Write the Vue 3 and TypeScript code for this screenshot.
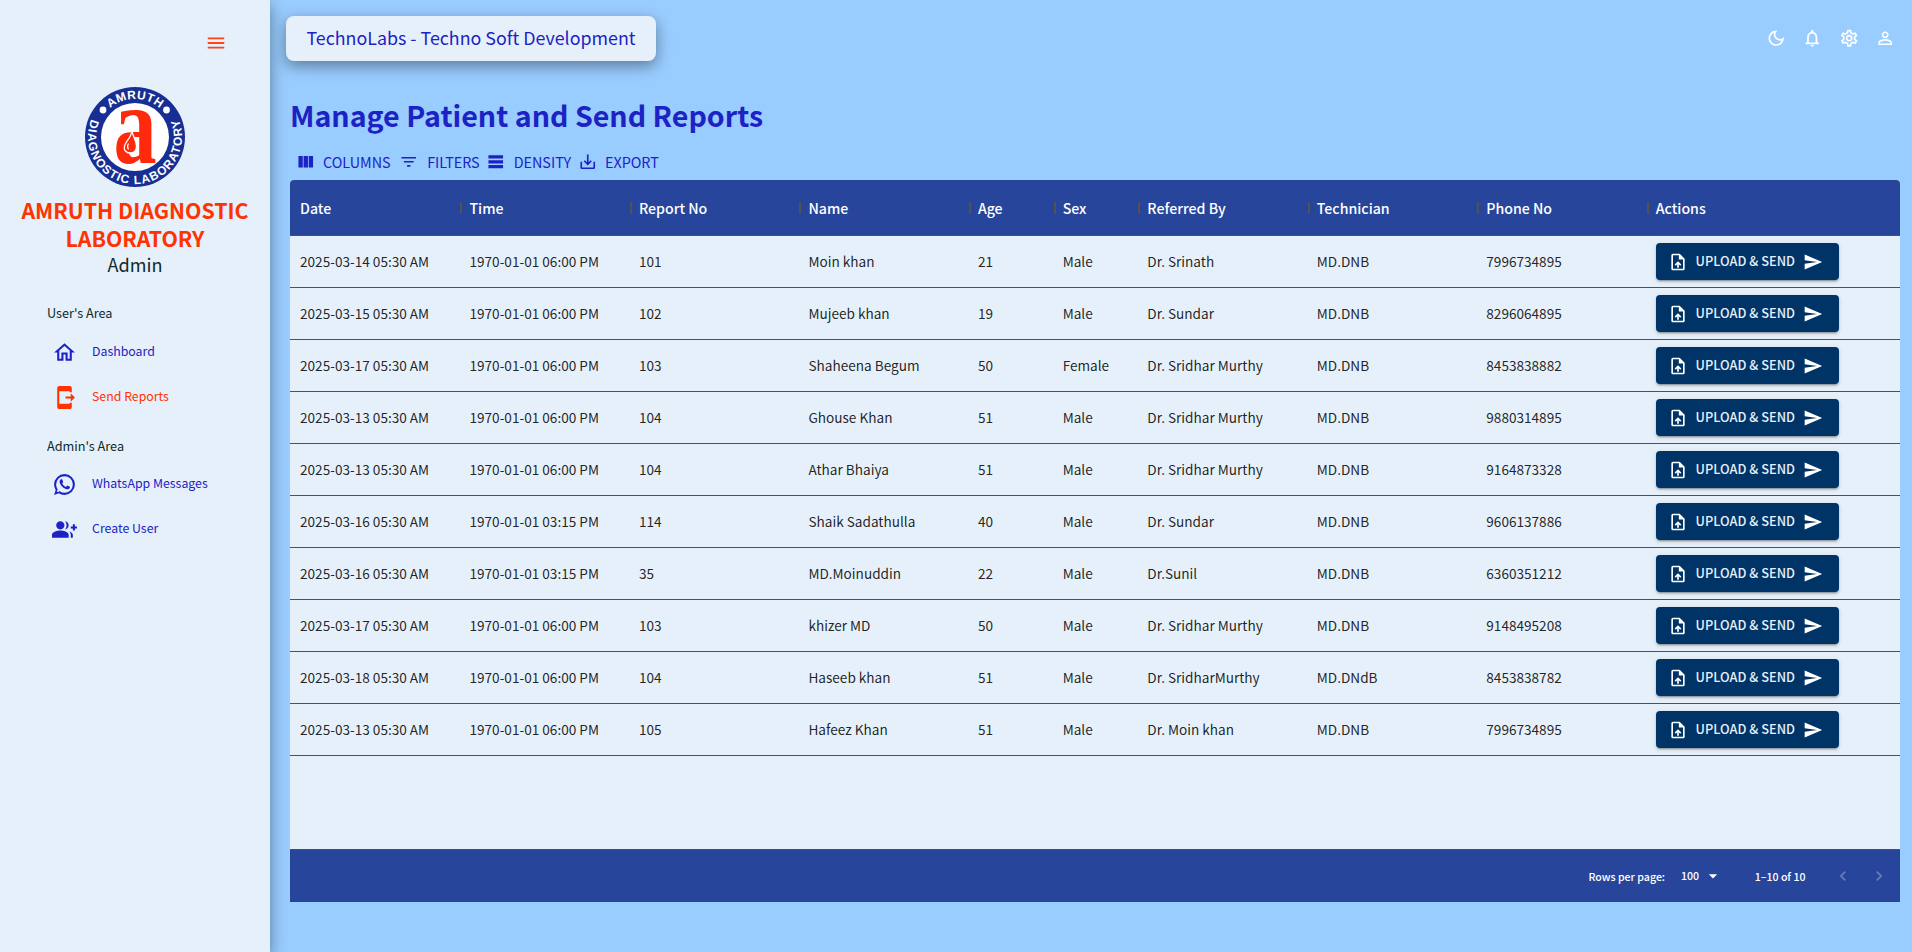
<script setup lang="ts">
interface Column {
  key: string
  label: string
}

interface Patient {
  date: string
  time: string
  report: string
  name: string
  age: string
  sex: string
  referred: string
  technician: string
  phone: string
}

interface NavItem {
  label: string
  icon: string
  active?: boolean
}

const columns: Column[] = [
  { key: 'date', label: 'Date' },
  { key: 'time', label: 'Time' },
  { key: 'report', label: 'Report No' },
  { key: 'name', label: 'Name' },
  { key: 'age', label: 'Age' },
  { key: 'sex', label: 'Sex' },
  { key: 'referred', label: 'Referred By' },
  { key: 'technician', label: 'Technician' },
  { key: 'phone', label: 'Phone No' },
  { key: 'actions', label: 'Actions' },
]

const dataColumns = columns.slice(0, -1)

function patient(
  date: string, time: string, report: string, name: string, age: string,
  sex: string, referred: string, technician: string, phone: string,
): Patient {
  return { date: `${date} 05:30 AM`, time: `1970-01-01 ${time}`, report, name, age, sex, referred, technician, phone }
}

const patients: Patient[] = [
  patient('2025-03-14', '06:00 PM', '101', 'Moin khan', '21', 'Male', 'Dr. Srinath', 'MD.DNB', '7996734895'),
  patient('2025-03-15', '06:00 PM', '102', 'Mujeeb khan', '19', 'Male', 'Dr. Sundar', 'MD.DNB', '8296064895'),
  patient('2025-03-17', '06:00 PM', '103', 'Shaheena Begum', '50', 'Female', 'Dr. Sridhar Murthy', 'MD.DNB', '8453838882'),
  patient('2025-03-13', '06:00 PM', '104', 'Ghouse Khan', '51', 'Male', 'Dr. Sridhar Murthy', 'MD.DNB', '9880314895'),
  patient('2025-03-13', '06:00 PM', '104', 'Athar Bhaiya', '51', 'Male', 'Dr. Sridhar Murthy', 'MD.DNB', '9164873328'),
  patient('2025-03-16', '03:15 PM', '114', 'Shaik Sadathulla', '40', 'Male', 'Dr. Sundar', 'MD.DNB', '9606137886'),
  patient('2025-03-16', '03:15 PM', '35', 'MD.Moinuddin', '22', 'Male', 'Dr.Sunil', 'MD.DNB', '6360351212'),
  patient('2025-03-17', '06:00 PM', '103', 'khizer MD', '50', 'Male', 'Dr. Sridhar Murthy', 'MD.DNB', '9148495208'),
  patient('2025-03-18', '06:00 PM', '104', 'Haseeb khan', '51', 'Male', 'Dr. SridharMurthy', 'MD.DNdB', '8453838782'),
  patient('2025-03-13', '06:00 PM', '105', 'Hafeez Khan', '51', 'Male', 'Dr. Moin khan', 'MD.DNB', '7996734895'),
]

function cell(row: Patient, key: string): string {
  return row[key as keyof Patient]
}

const icons: Record<string, string> = {
  menu: 'M3 18h18v-2H3zm0-5h18v-2H3zm0-7v2h18V6z',
  home: 'm12 5.69 5 4.5V18h-2v-6H9v6H7v-7.81zM12 3 2 12h3v8h6v-6h2v6h6v-8h3z',
  send: 'M17 18H7V6h10v1h2V3c0-1.1-.9-2-2-2H7c-1.1 0-2 .9-2 2v18c0 1.1.9 2 2 2h10c1.1 0 2-.9 2-2v-4h-2zm5-6-4-4v3h-5v2h5v3z',
  whatsapp: 'M16.75 13.96c.25.13.41.2.46.3.06.11.04.61-.21 1.18-.2.56-1.24 1.1-1.7 1.12-.46.02-.47.36-2.96-.73-2.49-1.09-3.99-3.75-4.11-3.92-.12-.17-.96-1.38-.92-2.61.05-1.22.69-1.8.95-2.04.24-.26.51-.29.68-.26h.47c.15 0 .36-.06.55.45l.69 1.87c.06.13.1.28.01.44l-.27.41-.39.42c-.12.12-.26.25-.12.5.12.26.62 1.09 1.32 1.78.91.88 1.71 1.17 1.95 1.3.24.14.39.12.54-.04l.81-.94c.19-.25.35-.19.58-.11l1.67.88M12 2a10 10 0 0 1 10 10 10 10 0 0 1-10 10c-1.97 0-3.8-.57-5.35-1.55L2 22l1.55-4.65A9.969 9.969 0 0 1 2 12 10 10 0 0 1 12 2m0 2a8 8 0 0 0-8 8c0 1.72.54 3.31 1.46 4.61L4.5 19.5l2.89-.96A7.95 7.95 0 0 0 12 20a8 8 0 0 0 8-8 8 8 0 0 0-8-8z',
  group: 'M22 9V7h-2v2h-2v2h2v2h2v-2h2V9zM8 12c2.21 0 4-1.79 4-4s-1.79-4-4-4-4 1.79-4 4 1.79 4 4 4m0 1c-2.67 0-8 1.34-8 4v3h16v-3c0-2.66-5.33-4-8-4m4.51-8.95C13.43 5.11 14 6.49 14 8s-.57 2.89-1.49 3.95C14.47 11.7 16 10.04 16 8s-1.53-3.7-3.49-3.95m4.02 9.78C17.42 14.66 18 15.7 18 17v3h2v-3c0-1.45-1.59-2.51-3.47-3.17',
  moon: 'M9.37 5.51c-.18.64-.27 1.31-.27 1.99 0 4.08 3.32 7.4 7.4 7.4.68 0 1.35-.09 1.99-.27C17.45 17.19 14.93 19 12 19c-3.86 0-7-3.14-7-7 0-2.93 1.81-5.45 4.37-6.49M12 3c-4.97 0-9 4.03-9 9s4.03 9 9 9 9-4.03 9-9c0-.46-.04-.92-.1-1.36-.98 1.37-2.58 2.26-4.4 2.26-2.98 0-5.4-2.42-5.4-5.4 0-1.81.89-3.42 2.26-4.4-.44-.06-.9-.1-1.36-.1',
  bell: 'M12 22c1.1 0 2-.9 2-2h-4c0 1.1.9 2 2 2m6-6v-5c0-3.07-1.63-5.64-4.5-6.32V4c0-.83-.67-1.5-1.5-1.5s-1.5.67-1.5 1.5v.68C7.64 5.36 6 7.92 6 11v5l-2 2v1h16v-1zm-2 1H8v-6c0-2.48 1.51-4.5 4-4.5s4 2.02 4 4.5z',
  gear: 'M19.43 12.98c.04-.32.07-.64.07-.98s-.03-.66-.07-.98l2.11-1.65c.19-.15.24-.42.12-.64l-2-3.46c-.09-.16-.26-.25-.44-.25-.06 0-.12.01-.17.03l-2.49 1c-.52-.4-1.08-.73-1.69-.98l-.38-2.65C14.46 2.18 14.25 2 14 2h-4c-.25 0-.46.18-.49.42l-.38 2.65c-.61.25-1.17.59-1.69.98l-2.49-1c-.06-.02-.12-.03-.18-.03-.17 0-.34.09-.43.25l-2 3.46c-.13.22-.07.49.12.64l2.11 1.65c-.04.32-.07.65-.07.98s.03.66.07.98l-2.11 1.65c-.19.15-.24.42-.12.64l2 3.46c.09.16.26.25.44.25.06 0 .12-.01.17-.03l2.49-1c.52.4 1.08.73 1.69.98l.38 2.65c.03.24.24.42.49.42h4c.25 0 .46-.18.49-.42l.38-2.65c.61-.25 1.17-.59 1.69-.98l2.49 1c.06.02.12.03.18.03.17 0 .34-.09.43-.25l2-3.46c.12-.22.07-.49-.12-.64zm-1.98-1.71c.04.31.05.52.05.73s-.02.43-.05.73l-.14 1.13.89.7 1.08.84-.7 1.21-1.27-.51-1.04-.42-.9.68c-.43.32-.84.56-1.25.73l-1.06.43-.16 1.13-.2 1.35h-1.4l-.19-1.35-.16-1.13-1.06-.43c-.43-.18-.83-.41-1.23-.71l-.91-.7-1.06.43-1.27.51-.7-1.21 1.08-.84.89-.7-.14-1.13c-.03-.31-.05-.54-.05-.74s.02-.43.05-.73l.14-1.13-.89-.7-1.08-.84.7-1.21 1.27.51 1.04.42.9-.68c.43-.32.84-.56 1.25-.73l1.06-.43.16-1.13.2-1.35h1.39l.19 1.35.16 1.13 1.06.43c.43.18.83.41 1.23.71l.91.7 1.06-.43 1.27-.51.7 1.21-1.07.85-.89.7zM12 8c-2.21 0-4 1.79-4 4s1.79 4 4 4 4-1.79 4-4-1.79-4-4-4m0 6c-1.1 0-2-.9-2-2s.9-2 2-2 2 .9 2 2-.9 2-2 2',
  person: 'M12 5.9c1.16 0 2.1.94 2.1 2.1s-.94 2.1-2.1 2.1S9.9 9.16 9.9 8s.94-2.1 2.1-2.1m0 9c2.97 0 6.1 1.46 6.1 2.1v1.1H5.9V17c0-.64 3.13-2.1 6.1-2.1M12 4C9.79 4 8 5.79 8 8s1.79 4 4 4 4-1.79 4-4-1.79-4-4-4m0 9c-2.67 0-8 1.34-8 4v3h16v-3c0-2.66-5.33-4-8-4',
  columns: 'M14.67 5v14H9.33V5zm1 14H21V5h-5.33zm-7.34 0V5H3v14z',
  filters: 'M10 18h4v-2h-4zM3 6v2h18V6zm3 7h12v-2H6z',
  density: 'M21 8H3V4h18zm0 2H3v4h18zm0 6H3v4h18z',
  export: 'M19 12v7H5v-7H3v7c0 1.1.9 2 2 2h14c1.1 0 2-.9 2-2v-7zm-6 .67 2.59-2.58L17 11.5l-5 5-5-5 1.41-1.41L11 12.67V3h2z',
  upload: 'M14 2H6c-1.1 0-1.99.9-1.99 2L4 20c0 1.1.89 2 1.99 2H18c1.1 0 2-.9 2-2V8zm4 18H6V4h7v5h5zM8 15.01l1.41 1.41L11 14.84V19h2v-4.16l1.59 1.59L16 15.01 12.01 11z',
  plane: 'M2.01 21 23 12 2.01 3 2 10l15 2-15 2z',
  drop: 'm7 10 5 5 5-5z',
  prev: 'M15.41 16.59 10.83 12l4.58-4.59L14 6l-6 6 6 6z',
  next: 'M8.59 16.59 13.17 12 8.59 7.41 10 6l6 6-6 6z',
}

const userNav: NavItem[] = [
  { label: 'Dashboard', icon: 'home' },
  { label: 'Send Reports', icon: 'send', active: true },
]
const adminNav: NavItem[] = [
  { label: 'WhatsApp Messages', icon: 'whatsapp' },
  { label: 'Create User', icon: 'group' },
]
const tools = ['Columns', 'Filters', 'Density', 'Export']
const headerIcons = ['moon', 'bell', 'gear', 'person']
</script>

<template>
  <div class="app">
    <aside class="sidebar">
      <button class="menu-btn" aria-label="Collapse menu">
        <svg class="menu-icon" viewBox="0 0 24 24"><path :d="icons.menu" /></svg>
      </button>

      <svg class="logo" viewBox="-50 -50 100 100">
        <defs>
          <path id="arc-top" d="M-38 0A38 38 0 0 1 38 0" />
          <path id="arc-bottom" d="M-33.2 -33.2A47 47 0 1 0 33.2 -33.2" />
        </defs>
        <circle r="50" class="logo-ring" />
        <circle r="34" class="logo-disc" />
        <circle cx="-32" cy="-27" r="3.4" class="logo-disc" />
        <circle cx="31.5" cy="-27" r="3.4" class="logo-disc" />
        <text class="logo-text"><textPath href="#arc-top" startOffset="50%" text-anchor="middle" textLength="54">AMRUTH</textPath></text>
        <text class="logo-text"><textPath href="#arc-bottom" startOffset="50%" text-anchor="middle" textLength="184">DIAGNOSTIC LABORATORY</textPath></text>
        <text class="logo-letter" text-anchor="middle" transform="translate(0 25.5) scale(.8 1.03)">a</text>
        <path class="logo-drop" d="M-3-6C-2.500-1 1.500 3 1.500 9C1.500 13.500-1.500 16-5 16C-9 16-11.500 13-10.500 9C-9.500 4.500-4 1-3-6Z" />
        <path class="logo-shine" d="M-6.500 6.500Q-8.500 9.500-6.500 12.500" />
      </svg>

      <h2 class="lab">AMRUTH DIAGNOSTIC LABORATORY</h2>
      <p class="role">Admin</p>

      <nav>
        <h3 class="area">User's Area</h3>
        <a v-for="item in userNav" :key="item.label" class="nav-item" :class="{ active: item.active }">
          <svg class="nav-icon" viewBox="0 0 24 24"><path :d="icons[item.icon]" /></svg>
          <span class="nav-label">{{ item.label }}</span>
        </a>
        <h3 class="area area-admin">Admin's Area</h3>
        <a v-for="item in adminNav" :key="item.label" class="nav-item">
          <svg class="nav-icon" viewBox="0 0 24 24"><path :d="icons[item.icon]" /></svg>
          <span class="nav-label">{{ item.label }}</span>
        </a>
      </nav>
    </aside>

    <main class="content">
      <header class="topbar">
        <div class="brand">TechnoLabs - Techno Soft Development</div>
        <div class="top-icons">
          <svg v-for="name in headerIcons" :key="name" class="top-icon" viewBox="0 0 24 24"><path :d="icons[name]" /></svg>
        </div>
      </header>

      <h1 class="title">Manage Patient and Send Reports</h1>

      <div class="toolbar">
        <button v-for="tool in tools" :key="tool" class="tool" :class="'tool-' + tool.toLowerCase()">
          <svg class="tool-icon" viewBox="0 0 24 24"><path :d="icons[tool.toLowerCase()]" /></svg>
          <span>{{ tool.toUpperCase() }}</span>
        </button>
      </div>

      <section class="grid">
        <div class="grid-head">
          <div v-for="col in columns" :key="col.key" class="head-cell">
            <i class="separator"></i>
            <span>{{ col.label }}</span>
          </div>
        </div>

        <div class="grid-body">
          <div v-for="(row, i) in patients" :key="i" class="row">
            <div v-for="col in dataColumns" :key="col.key" class="cell">{{ cell(row, col.key) }}</div>
            <div class="cell">
              <button class="upload">
                <svg class="btn-icon" viewBox="0 0 24 24"><path :d="icons.upload" /></svg>
                <span class="upload-label">UPLOAD &amp; SEND</span>
                <svg class="btn-icon" viewBox="0 0 24 24"><path :d="icons.plane" /></svg>
              </button>
            </div>
          </div>
        </div>

        <footer class="grid-foot">
          <span class="per-page">Rows per page:</span>
          <span class="page-size">100</span>
          <svg class="foot-icon" viewBox="0 0 24 24"><path :d="icons.drop" /></svg>
          <span class="range">1–10 of 10</span>
          <svg class="foot-icon pager" viewBox="0 0 24 24"><path :d="icons.prev" /></svg>
          <svg class="foot-icon pager last" viewBox="0 0 24 24"><path :d="icons.next" /></svg>
        </footer>
      </section>
    </main>
  </div>
</template>

<style>
body {
  overflow: hidden;
}
</style>

<style scoped>
.app {
  display: flex;
  height: 952px;
  background: #99ccff;
  color: #1c22c4;
  font-family: "Noto Sans CJK SC", "Open Sans", sans-serif;
  overflow: hidden;
}
.app * {
  box-sizing: border-box;
}
svg {
  display: block;
  flex: none;
  fill: currentColor;
}
button {
  border: 0;
  padding: 0;
  background: none;
  color: inherit;
  font: inherit;
}
h1, h2, h3, p {
  margin: 0;
}

/* Sidebar */
.sidebar {
  position: relative;
  display: flex;
  flex-direction: column;
  align-items: center;
  flex: none;
  width: 270px;
  padding-top: 32px;
  background: #e6f0fa;
  box-shadow: 0 5px 15px rgba(0, 0, 0, 0.4);
}
.menu-btn {
  align-self: flex-end;
  margin-right: 43px;
  color: #ff3300;
  opacity: 0.9;
}
.menu-icon {
  width: 22px;
  height: 22px;
}
.logo {
  width: 100px;
  height: 100px;
  margin-top: 33px;
}
.logo-ring {
  fill: #172f94;
}
.logo-disc {
  fill: #fff;
}
.logo-text {
  fill: #fff;
  font: bold 12px "Liberation Sans", Arial, sans-serif;
}
.logo-letter {
  fill: #ff2a0c;
  font: bold 108px "Liberation Serif", "Times New Roman", serif;
}
.logo-drop {
  fill: #ff2a0c;
  stroke: #fff;
  stroke-width: 1.3;
}
.logo-shine {
  fill: none;
  stroke: #fff;
  stroke-width: 1.1;
}
.lab {
  width: 250px;
  margin-top: 8.5px;
  color: #ff3300;
  font-size: 21.34px;
  font-weight: 700;
  line-height: 28px;
  text-align: center;
}
.role {
  color: #0d2b2b;
  font-size: 18.08px;
  line-height: 24px;
}
nav {
  width: 100%;
  margin-top: 27px;
}
.area {
  margin: 0 0 7px 47px;
  color: #0d2b2b;
  font-size: 12.7px;
  font-weight: 400;
  line-height: 20px;
}
.area-admin {
  margin-top: 16px;
  margin-bottom: 6px;
}
.nav-item {
  display: flex;
  align-items: center;
  height: 45px;
  padding-left: 52px;
}
.nav-icon {
  width: 25px;
  height: 25px;
}
.nav-label {
  margin-left: 15px;
  padding-bottom: 3px;
  font-size: 12.35px;
  line-height: 20px;
}
.active {
  color: #ff3300;
}

/* Top bar */
.content {
  display: flex;
  flex-direction: column;
  flex: 1;
  padding: 16px 12px 0 16px;
}
.topbar {
  display: flex;
  align-items: center;
  justify-content: space-between;
  height: 45px;
}
.brand {
  width: 370px;
  height: 45px;
  padding-bottom: 3px;
  border-radius: 8px;
  background: #e6f0fa;
  box-shadow: 0 5px 15px rgba(0, 0, 0, 0.4);
  font-size: 17.84px;
  line-height: 42px;
  text-align: center;
}
.top-icons {
  display: flex;
  gap: 16px;
  margin-right: 4.400px;
  color: #fff;
}
.top-icon {
  width: 20.4px;
  height: 20.4px;
}

/* Heading and grid toolbar */
.title {
  margin: 34px 0 0 4px;
  font-size: 28.62px;
  font-weight: 700;
  line-height: 40px;
}
.toolbar {
  display: flex;
  align-items: center;
  height: 26px;
  margin: 14px 0 5px 4px;
  padding-left: 5.5px;
  font-size: 14.35px;
  line-height: 24px;
}
.tool {
  display: flex;
  align-items: center;
}
.tool span {
  padding-bottom: 1px;
}
.tool-columns {
  width: 103px;
}
.tool-filters {
  width: 87.7px;
}
.tool-density {
  width: 92.3px;
}
.tool-icon {
  width: 19.5px;
  height: 19.5px;
  margin-right: 8px;
}
.tool-filters .tool-icon {
  margin-right: 9.2px;
}
.tool-export .tool-icon {
  margin-right: 7px;
}

/* Data grid */
.grid {
  display: flex;
  flex-direction: column;
  width: 1610px;
  height: 722px;
  margin-left: 4px;
  border-radius: 4px 4px 0 0;
  background: #e6f0fa;
  overflow: hidden;
}
.grid-head,
.row {
  display: grid;
  grid-template-columns: repeat(4, minmax(0, 2fr)) repeat(2, minmax(0, 1fr)) repeat(3, minmax(0, 2fr)) minmax(0, 3fr);
}
.grid-head {
  height: 56px;
  border-bottom: 1px solid #515151;
  background: #27459b;
  color: #fff;
  font-size: 14.15px;
  font-weight: 500;
  line-height: 20px;
}
.head-cell {
  display: flex;
  align-items: center;
  min-width: 0;
}
.head-cell span {
  padding-left: 7px;
}
.separator {
  width: 2px;
  height: 12px;
  margin-left: 1px;
  background: #515151;
}
.head-cell:first-child .separator {
  background: none;
}
.grid-body {
  flex: 1;
}
.row {
  height: 52px;
  border-bottom: 1px solid #515151;
}
.cell {
  padding-left: 10px;
  color: rgba(0, 0, 0, 0.87);
  font-size: 13.6px;
  line-height: 50px;
  white-space: nowrap;
}
.upload {
  display: flex;
  align-items: center;
  width: 183px;
  height: 37px;
  margin-top: 7px;
  padding: 0 16px 0 12px;
  border-radius: 4px;
  background: #003366;
  box-shadow: 0 3px 1px -2px rgba(0, 0, 0, 0.2), 0 2px 2px rgba(0, 0, 0, 0.14), 0 1px 5px rgba(0, 0, 0, 0.12);
  color: #fff;
}
.btn-icon {
  width: 20px;
  height: 20px;
}
.upload-label {
  flex: 1;
  padding-bottom: 1px;
  color: #e6f0fa;
  font-size: 12.8px;
  font-weight: 500;
  line-height: 24px;
  text-align: center;
}
.grid-foot {
  display: flex;
  align-items: center;
  justify-content: flex-end;
  height: 53px;
  border-top: 1px solid #515151;
  background: #27459b;
  color: #fff;
  font-size: 10.6px;
  font-weight: 500;
  line-height: 20px;
}
.per-page,
.range {
  padding-top: 1px;
}
.page-size {
  margin-left: 16px;
}
.foot-icon {
  width: 20px;
  height: 20px;
}
.page-size + .foot-icon {
  margin-left: 4px;
}
.range {
  margin-left: 31.5px;
}
.pager {
  margin-left: 27.5px;
  opacity: 0.3;
}
.pager.last {
  margin: 0 11px 0 16px;
}
</style>
